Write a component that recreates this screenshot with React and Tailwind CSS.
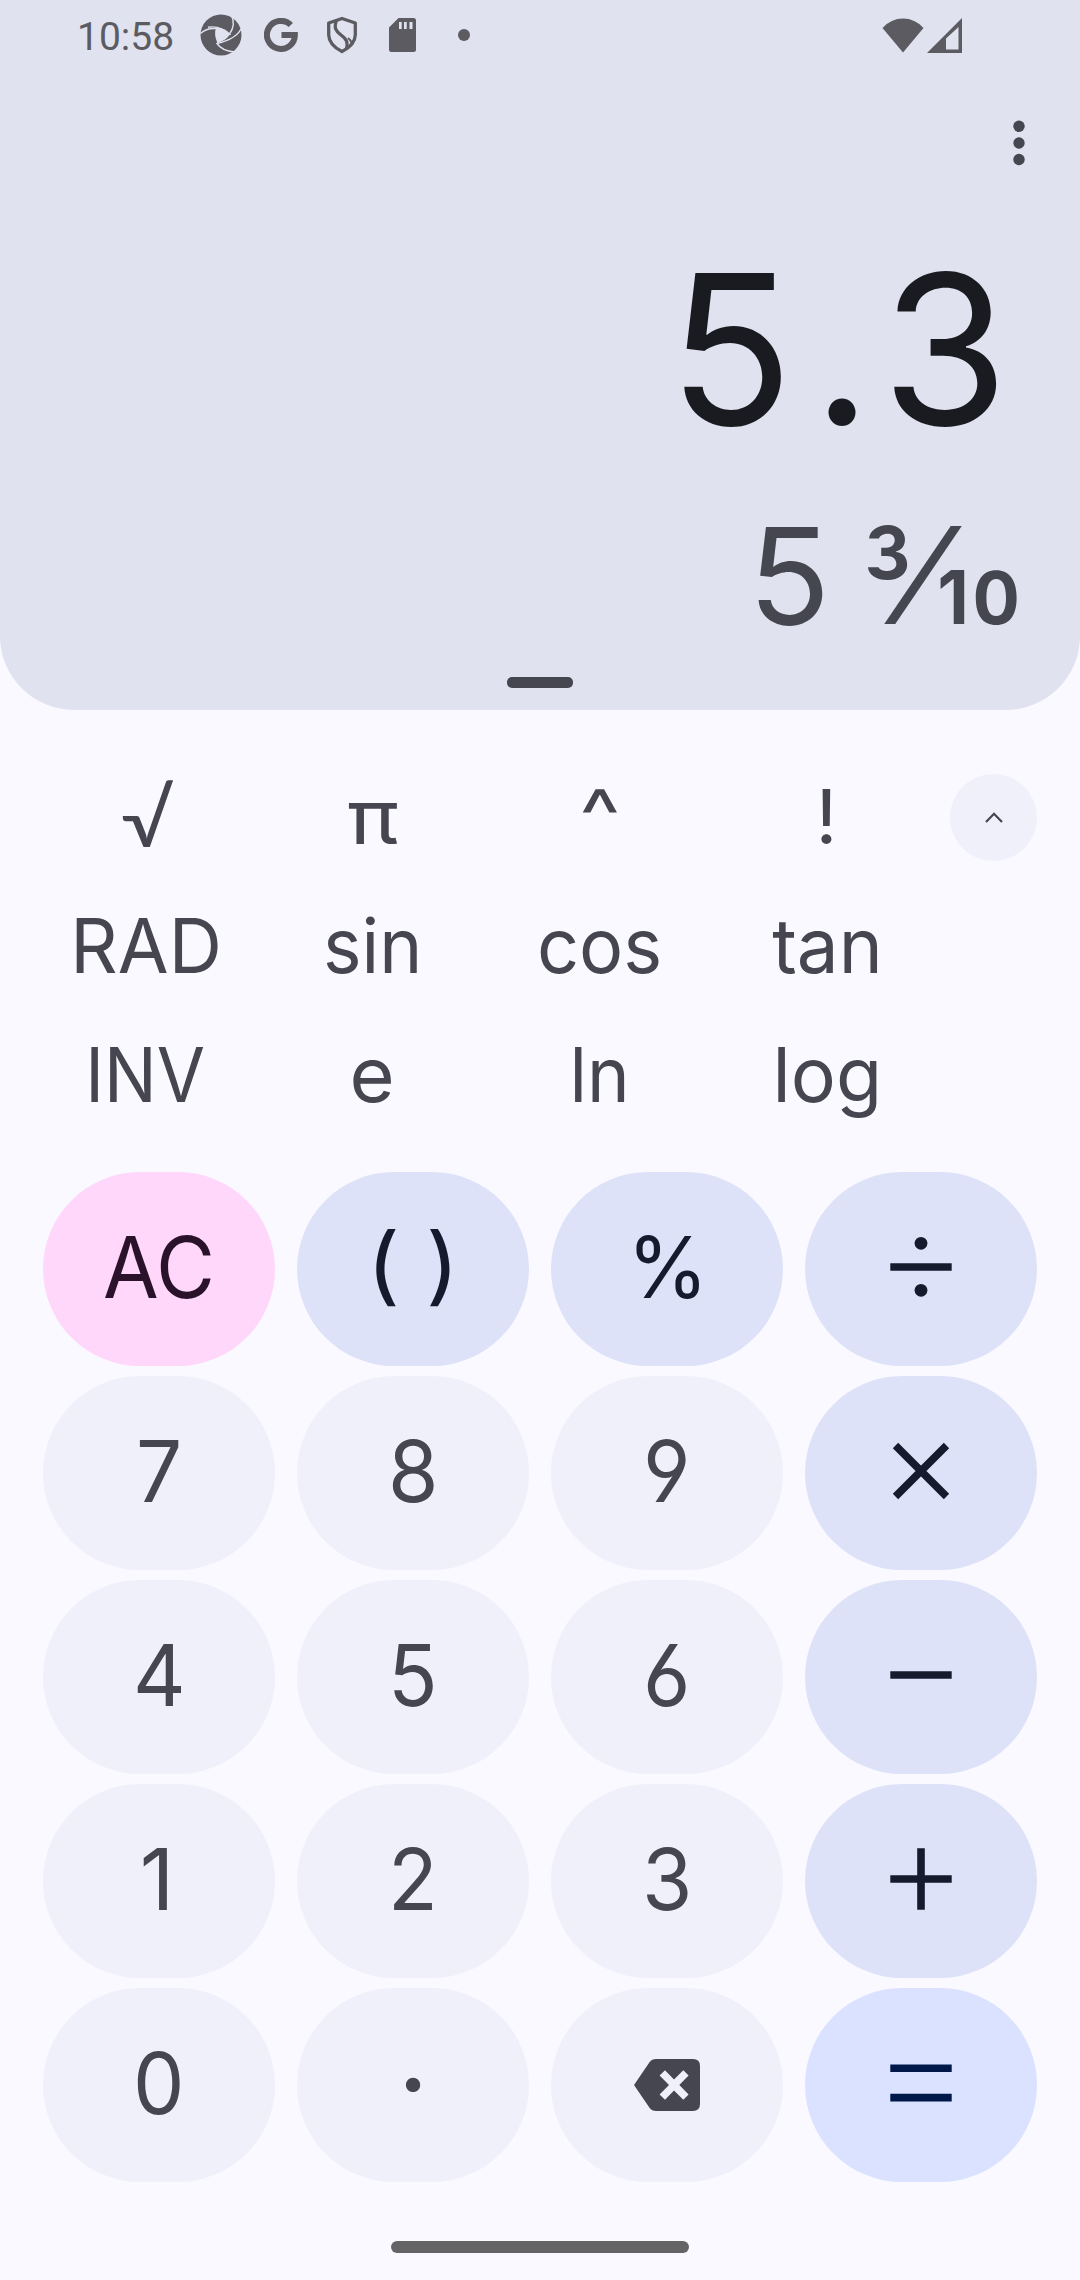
const sciKeys = [
  { label: "√", className: "font-[Lato,sans-serif] text-[78px] scale-x-[1.08] translate-x-[2px] translate-y-px" },
  { label: "π", className: "scale-x-[1.12]" },
  { label: "^", className: "scale-x-[1.15] -translate-y-px" },
  { label: "!", className: "" },
  { label: "RAD", className: "scale-x-[0.97] translate-x-px" },
  { label: "sin", className: "scale-x-[0.96]" },
  { label: "cos", className: "scale-x-[0.97]" },
  { label: "tan", className: "scale-x-[0.98] translate-x-px" },
  { label: "INV", className: "scale-x-[0.92]" },
  { label: "e", className: "scale-x-[1.02]" },
  { label: "ln", className: "scale-x-[0.95]" },
  { label: "log", className: "scale-x-[0.99] translate-x-px" },
];

function Op({ children }) {
  return (
    <svg viewBox="0 0 64 64" className="w-16 h-16 -mt-1" fill="none" stroke="currentColor" strokeWidth="7.6">
      {children}
    </svg>
  );
}

const divide = (
  <Op>
    <path d="M1.3 32h61.4" />
    <circle cx="32" cy="8.3" r="6.4" fill="currentColor" stroke="none" />
    <circle cx="32" cy="55.3" r="6.4" fill="currentColor" stroke="none" />
  </Op>
);
const times = (
  <Op>
    <path d="M6.5 6.5l51 51M57.5 6.5l-51 51" />
  </Op>
);
const minus = (
  <Op>
    <path d="M1.3 32h61.4" />
  </Op>
);
const plus = (
  <Op>
    <path d="M1.3 32h61.4M32 1.3v61.4" />
  </Op>
);
const equals = (
  <Op>
    <path d="M1.3 17.3h61.4M1.3 46.6h61.4" />
  </Op>
);
const backspace = (
  <svg viewBox="0 0 66 52" className="w-[66px] h-[52px]">
    <path
      fill="currentColor"
      fillRule="evenodd"
      d="M22 0H59Q66 0 66 7V45Q66 52 59 52H22Q18 52 15.5 48.7L0 26L15.5 3.3Q18 0 22 0ZM31 11.3L25.6 16.6L35 26L25.6 35.4L31 40.7L40 31.4L49.3 40.7L54.6 35.4L45.3 26L54.6 16.6L49.3 11.3L40 20.6Z"
    />
  </svg>
);

const NUM = "bg-[#eff0fa] text-[#45464f]";
const OPR = "bg-[#dde2f9] text-[#151b2c]";

const keys = [
  { name: "clear", label: "AC", tone: "bg-[#fed7fa] text-[#2a122b]", fit: "scale-x-[0.95]" },
  { name: "parentheses", label: "( )", tone: OPR, fit: "scale-x-[1.08] -translate-y-[3px]" },
  { name: "percent", label: "%", tone: OPR, fit: "scale-x-[0.97] translate-x-px" },
  { name: "divide", icon: divide, tone: OPR },
  { name: "7", label: "7", tone: NUM },
  { name: "8", label: "8", tone: NUM },
  { name: "9", label: "9", tone: NUM },
  { name: "multiply", icon: times, tone: OPR },
  { name: "4", label: "4", tone: NUM },
  { name: "5", label: "5", tone: NUM },
  { name: "6", label: "6", tone: NUM },
  { name: "minus", icon: minus, tone: OPR },
  { name: "1", label: "1", tone: NUM, fit: "-translate-x-[2px]" },
  { name: "2", label: "2", tone: NUM },
  { name: "3", label: "3", tone: NUM },
  { name: "plus", icon: plus, tone: OPR },
  { name: "0", label: "0", tone: NUM },
  { name: "point", label: "·", tone: NUM, fit: "text-[108px] -translate-y-px" },
  { name: "delete", icon: backspace, tone: NUM },
  { name: "equals", icon: equals, tone: "bg-[#dae2ff] text-[#001849]" },
];

function StatusBar() {
  return (
    <div className="flex h-[70px] items-center pl-[77px] text-[#5c5b61]">
      <span className="w-[123px] font-[Roboto,sans-serif] text-[39px] leading-[70px] mt-[3px]">10:58</span>
      <svg viewBox="0 0 42 42" className="w-[42px] h-[42px]">
        <circle cx="21" cy="21" r="20.5" fill="currentColor" />
        <g fill="none" stroke="#e0e2ef" strokeWidth="1.4">
          <path d="M0.5 19.5Q6 14 16 14.5" />
          <path d="M8 13.3Q20 11 30.5 21" />
          <path d="M31.5 1.5Q36 11 29.5 20" />
          <path d="M41 15Q36 25 17 29.5" />
          <path d="M16.5 29Q22 37 34.5 38" />
        </g>
        <path d="M16 14Q25 13.5 30 20Q27 26 17.5 29.3Q13.5 20 16 14Z" fill="#e0e2ef" />
      </svg>
      <svg viewBox="0 0 34 34" className="ml-[22px] w-[34px] h-[34px]" fill="none" stroke="currentColor" strokeWidth="6">
        <path d="M26.8 7A14 14 0 1 0 30.9 17H17.5" />
      </svg>
      <svg viewBox="0 0 32 38" className="ml-[28px] w-[32px] h-[38px]" fill="none" stroke="currentColor" strokeWidth="3.3">
        <path d="M16 2.5L29.3 7V19Q29 29 16 35.5Q3 29 2.7 19V7Z" strokeLinejoin="round" />
        <path d="M10.5 4.5C7.5 12 10 15 15 19C21 23.5 22 26 20.5 33" />
        <path d="M22 22C26 25 26 28 24.5 30" strokeWidth="2" />
      </svg>
      <svg viewBox="0 0 27 34" className="ml-[31px] w-[27px] h-[34px]">
        <path
          fill="currentColor"
          fillRule="evenodd"
          d="M9.5 0H24.5Q27 0 27 2.5V31.5Q27 34 24.5 34H2.5Q0 34 0 31.5V9.5ZM10 4V11H12.7V4ZM15 4V11H17.7V4ZM20.5 4V11H23.5V4Z"
        />
      </svg>
      <span className="ml-[42px] h-3 w-3 rounded-full bg-current" />
      <svg viewBox="0 0 42 35" className="ml-[412px] w-[42px] h-[35px]">
        <path fill="currentColor" d="M21 34.5L0.5 10Q9 0.5 21 0.5Q33 0.5 41.5 10Z" />
      </svg>
      <svg viewBox="0 0 35 35" className="ml-[3px] w-[35px] h-[35px]">
        <path fill="currentColor" fillRule="evenodd" d="M0 35L35 0V35ZM19 20.5V31.5H31.5V9Z" />
      </svg>
    </div>
  );
}

export default function App() {
  return (
    <div className="flex h-[2280px] w-[1080px] flex-col overflow-hidden bg-[#faf9ff] font-[Inter,sans-serif] [font-feature-settings:'cv03','cv04']">
      <section className="flex h-[710px] flex-col rounded-b-[74px] bg-[#e0e2ef]">
        <StatusBar />
        <div className="flex h-[146px] justify-end pr-[55px] pt-[50px]">
          <svg viewBox="0 0 12 46" className="h-[46px] w-3 text-[#45464f]" fill="currentColor">
            <circle cx="6" cy="6.3" r="5.7" />
            <circle cx="6" cy="23" r="5.7" />
            <circle cx="6" cy="39.5" r="5.7" />
          </svg>
        </div>
        <div className="mt-[33px] flex h-[200px] justify-end pr-[49px]">
          <span className="origin-right scale-x-[0.98] text-[209px] leading-[200px] tracking-[0.11em] text-[#1a1b20]">
            <span className="tracking-[0.095em]">5</span>
            <span className="tracking-[0.05em]">.</span>3
          </span>
        </div>
        <div className="mt-[77px] flex h-[100px] justify-end pr-[58px] text-[135px] leading-[100px] text-[#45464f]">
          <span className="origin-right">5</span>
          <span className="ml-[29px] origin-right -translate-y-px scale-x-[0.985] [font-feature-settings:'frac']">3⁄10</span>
        </div>
        <div className="mt-[51px] h-[11px] w-[66px] self-center rounded-[5px] bg-[#45464f]" />
      </section>

      <section className="mt-[42px] flex h-[420px] pl-8 text-[#45464f]">
        <div className="grid h-[387px] w-[908px] grid-cols-4 grid-rows-3 text-[76px] leading-[129px]">
          {sciKeys.map((k) => (
            <button key={k.label} className="flex items-center justify-center">
              <span className={k.className}>{k.label}</span>
            </button>
          ))}
        </div>
        <button className="ml-[10px] mt-[22px] flex h-[87px] w-[87px] items-center justify-center rounded-full bg-[#eff0fa]">
          <svg viewBox="0 0 18 11" className="h-[11px] w-[18px]" fill="none" stroke="currentColor" strokeWidth="2.2">
            <path d="M1 10L9 1.8L17 10" />
          </svg>
        </button>
      </section>

      <section className="grid grid-cols-4 gap-x-[22px] gap-y-[10px] px-[43px]">
        {keys.map((k) => (
          <button
            key={k.name}
            aria-label={k.name}
            className={`flex h-[194px] w-[232px] items-center justify-center rounded-full text-[85px] leading-[194px] ${k.tone}`}
          >
            {k.icon || <span className={`-mt-[3px] ${k.fit ?? "scale-x-[0.96]"}`}>{k.label}</span>}
          </button>
        ))}
      </section>

      <div className="mt-[59px] h-3 w-[298px] self-center rounded-full bg-[#646466]" />
    </div>
  );
}
